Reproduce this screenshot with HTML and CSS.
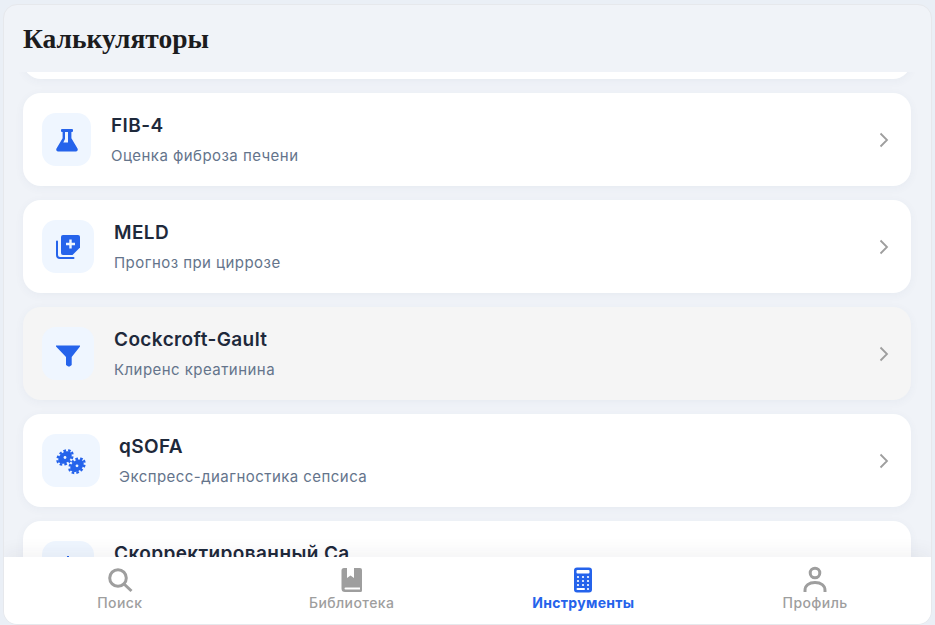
FILE: index.html
```html
<!DOCTYPE html>
<html lang="ru">
<head>
<meta charset="utf-8">
<title>Калькуляторы</title>
<link rel="stylesheet" href="styles.css">
</head>
<body>
<div class="app">
  <header class="header"><h1 class="title">Калькуляторы</h1></header>
  <main class="list">
    <div class="card card-cut"></div>
    <div class="card">
      <div class="icon-box box-49">
        <svg class="icon" width="24" height="26" viewBox="0 0 24 26"><path fill-rule="evenodd" d="M7 2h10a1 1 0 0 1 1 1v1a1 1 0 0 1-1 1h-.6v6.200l6.100 10.300c.8 1.400-.1 3-1.700 3H3.200c-1.600 0-2.500-1.600-1.700-3l6.100-10.300V5H7a1 1 0 0 1-1-1V3a1 1 0 0 1 1-1zm3 3v7l-1.700 3.500H13V5h-3z"/></svg>
      </div>
      <div class="text"><div class="name">FIB-4</div><div class="desc">Оценка фиброза печени</div></div>
      <svg class="chev" width="10" height="16" viewBox="0 0 10 16"><path d="M1.500 1.500 8 8l-6.500 6.500"/></svg>
    </div>
    <div class="card">
      <div class="icon-box box-52">
        <svg class="icon" width="26" height="26" viewBox="0 0 26 26"><path d="M1 7.500a1 1 0 0 1 2 0V21a2 2 0 0 0 2 2h13.500a1 1 0 0 1 0 2H5a4 4 0 0 1-4-4z"/><path d="M8 1h15a2 2 0 0 1 2 2v10.500L17.500 21H8a2 2 0 0 1-2-2V3a2 2 0 0 1 2-2z"/><path class="cut" d="M14.300 5.500h2.400v3.300H20v2.400h-3.300v3.300h-2.400v-3.300H11V8.800h3.300z"/></svg>
      </div>
      <div class="text"><div class="name">MELD</div><div class="desc">Прогноз при циррозе</div></div>
      <svg class="chev" width="10" height="16" viewBox="0 0 10 16"><path d="M1.500 1.500 8 8l-6.500 6.500"/></svg>
    </div>
    <div class="card card-hover">
      <div class="icon-box box-52">
        <svg class="icon" width="26" height="26" viewBox="0 0 26 26"><path d="M1 4.500h24v1L16.700 16v8l-2 1.500h-1.500L11 24V16L1 5.500z"/></svg>
      </div>
      <div class="text"><div class="name">Cockcroft-Gault</div><div class="desc">Клиренс креатинина</div></div>
      <svg class="chev" width="10" height="16" viewBox="0 0 10 16"><path d="M1.500 1.500 8 8l-6.500 6.500"/></svg>
    </div>
    <div class="card">
      <div class="icon-box box-58 box-narrow-gap">
        <svg class="icon" width="30" height="28" viewBox="0 0 30 28"><g transform="rotate(-40 9 10.500)"><ellipse cx="9" cy="10.500" rx="7.600" ry="5.200"/><ellipse class="teeth" cx="9" cy="10.500" rx="8.500" ry="6"/></g><circle class="cut" cx="9" cy="10.500" r="1.400"/><g transform="rotate(-40 21 18.800)"><ellipse cx="21" cy="18.800" rx="7.600" ry="5.200"/><ellipse class="teeth" cx="21" cy="18.800" rx="8.500" ry="6"/></g><circle class="cut" cx="21" cy="18.800" r="1.400"/></svg>
      </div>
      <div class="text"><div class="name">qSOFA</div><div class="desc">Экспресс-диагностика сепсиса</div></div>
      <svg class="chev" width="10" height="16" viewBox="0 0 10 16"><path d="M1.500 1.500 8 8l-6.500 6.500"/></svg>
    </div>
    <div class="card">
      <div class="icon-box box-52">
        <svg class="icon" width="26" height="26" viewBox="0 0 26 26"><path d="M12 1h2v10h-2z"/></svg>
      </div>
      <div class="text"><div class="name">Скорректированный Ca</div><div class="desc">Коррекция кальция по альбумину</div></div>
      <svg class="chev" width="10" height="16" viewBox="0 0 10 16"><path d="M1.500 1.500 8 8l-6.500 6.500"/></svg>
    </div>
  </main>
  <nav class="tabs">
    <div class="tab">
      <svg class="tab-icon" width="28" height="28" viewBox="0 0 28 28"><circle class="line" cx="12" cy="12" r="8.300"/><path class="line" d="m18 18 7.500 7"/></svg>
      <span class="tab-label">Поиск</span>
    </div>
    <div class="tab">
      <svg class="tab-icon" width="28" height="28" viewBox="0 0 28 28"><path d="M6 2h3v10l3.500-2.500L16 12V2h6a2 2 0 0 1 2 2v20.500a1.500 1.500 0 0 1-1.500 1.500H7a3.500 3.500 0 0 1-3.500-3.500V4.500A2.500 2.500 0 0 1 6 2zm1.500 19.500a1 1 0 0 0 0 2H22v-2z"/></svg>
      <span class="tab-label">Библиотека</span>
    </div>
    <div class="tab tab-active">
      <svg class="tab-icon" width="28" height="28" viewBox="0 0 28 28"><rect x="5" y="1.500" width="18" height="25" rx="3"/><g class="cut"><rect x="7.500" y="4" width="13" height="3.500" rx="1"/><circle cx="9" cy="11" r="1.100"/><circle cx="14" cy="11" r="1.100"/><circle cx="19" cy="11" r="1.100"/><circle cx="9" cy="15" r="1.100"/><circle cx="14" cy="15" r="1.100"/><circle cx="19" cy="15" r="1.100"/><circle cx="19" cy="19" r="1.100"/><circle cx="9" cy="19" r="1.100"/><circle cx="14" cy="19" r="1.100"/><rect x="7.500" y="22" width="8.500" height="2" rx="1"/><circle cx="19" cy="23" r="1.100"/></g></svg>
      <span class="tab-label">Инструменты</span>
    </div>
    <div class="tab">
      <svg class="tab-icon" width="28" height="28" viewBox="0 0 28 28"><circle class="line" cx="14" cy="7" r="4.800"/><path class="line" d="M4 26v-1.500C4 19.500 8 16.500 14 16.500s10 3 10 8V26"/></svg>
      <span class="tab-label">Профиль</span>
    </div>
  </nav>
</div>
</body>
</html>
```
FILE: styles.css
```css
* { box-sizing: border-box; }
html, body { height: 100%; }
body {
  margin: 0;
  padding: 4px 3px 0 3px;
  background: #eaeff6;
  font-family: "Inter", "Liberation Sans", sans-serif;
  overflow: hidden;
}
.app {
  height: 621px;
  display: flex;
  flex-direction: column;
  background: #f0f3f8;
  border: 1px solid #e6e8ec;
  border-radius: 14px;
  overflow: hidden;
}
.header { height: 67px; flex: none; padding: 17px 19px 0; }
.title {
  margin: 0;
  font-family: "Liberation Serif", serif;
  font-size: 27.500px;
  line-height: 34px;
  font-weight: 700;
  color: #1c1c1e;
}
.list {
  flex: 1;
  min-height: 0;
  overflow: hidden;
  display: flex;
  flex-direction: column;
  gap: 14px;
  padding: 0 20px 0 19px;
}
.card {
  flex: none;
  height: 93px;
  display: flex;
  align-items: center;
  gap: 20px;
  padding: 0 19px;
  background: #fff;
  border-radius: 18px;
  box-shadow: 0 2px 10px rgba(60, 80, 120, .05);
}
.card-cut { margin-top: -86px; }
.card-hover { background: #f5f5f5; }
.icon-box {
  flex: none;
  height: 53px;
  display: flex;
  align-items: center;
  justify-content: center;
  background: #eff6ff;
  border-radius: 14px;
}
.box-49 { width: 49px; }
.box-52 { width: 52px; }
.box-58 { width: 58px; }
.box-narrow-gap { margin-right: -1px; }
.icon { fill: #2563eb; }
.cut { fill: #eff6ff; }
.teeth { fill: none; stroke: #2563eb; stroke-width: 2.400; stroke-dasharray: 2.600 2; }
.text { flex: 1; min-width: 0; display: flex; flex-direction: column; gap: 10px; }
.name {
  font-size: 19px;
  line-height: 22px;
  font-weight: 600;
  letter-spacing: .4px;
  color: #1e293b;
}
.desc {
  font-size: 15px;
  line-height: 18px;
  letter-spacing: .45px;
  color: #64748b;
}
.chev { flex: none; margin-right: 3px; fill: none; stroke: #9e9e9e; stroke-width: 1.800; }
.tabs {
  position: relative;
  flex: none;
  height: 67px;
  display: grid;
  grid-template-columns: repeat(4, 1fr);
  background: #fff;
  box-shadow: 0 -6px 16px rgba(30, 40, 60, .05);
}
.tab {
  display: flex;
  flex-direction: column;
  align-items: center;
  gap: 1px;
  padding-top: 9px;
  color: #9e9e9e;
  fill: #9e9e9e;
}
.tab-icon { display: block; }
.tab-label {
  font-size: 14px;
  line-height: 16px;
  font-weight: 500;
  letter-spacing: .4px;
}
.line { fill: none; stroke: #9e9e9e; stroke-width: 3; }
.tab-active { color: #2563eb; fill: #2563eb; }
.tab-active .tab-label { font-weight: 700; letter-spacing: .3px; }
.tab-active .cut { fill: #fff; }
```
